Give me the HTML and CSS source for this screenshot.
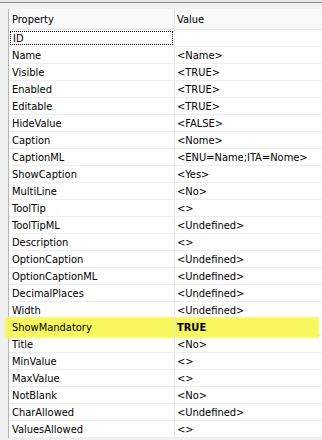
FILE: index.html
```html
<!DOCTYPE html>
<html lang="en">
<head>
  <meta charset="UTF-8">
  <title>Field Properties</title>
  <link rel="stylesheet" href="styles.css">
</head>
<body>
  <div class="topbar"></div>
  <div class="panel">
    <div class="grid">
      <div class="row head">
        <span class="prop">Property</span>
        <span class="val">Value</span>
      </div>
      <div class="row focus">
        <span class="prop"><span class="focus-box">ID</span></span>
        <span class="val"></span>
      </div>
      <div class="row"><span class="prop">Name</span><span class="val">&lt;Name&gt;</span></div>
      <div class="row"><span class="prop">Visible</span><span class="val">&lt;TRUE&gt;</span></div>
      <div class="row"><span class="prop">Enabled</span><span class="val">&lt;TRUE&gt;</span></div>
      <div class="row"><span class="prop">Editable</span><span class="val">&lt;TRUE&gt;</span></div>
      <div class="row"><span class="prop">HideValue</span><span class="val">&lt;FALSE&gt;</span></div>
      <div class="row"><span class="prop">Caption</span><span class="val">&lt;Nome&gt;</span></div>
      <div class="row"><span class="prop">CaptionML</span><span class="val">&lt;ENU=Name;ITA=Nome&gt;</span></div>
      <div class="row"><span class="prop">ShowCaption</span><span class="val">&lt;Yes&gt;</span></div>
      <div class="row"><span class="prop">MultiLine</span><span class="val">&lt;No&gt;</span></div>
      <div class="row"><span class="prop">ToolTip</span><span class="val">&lt;&gt;</span></div>
      <div class="row"><span class="prop">ToolTipML</span><span class="val">&lt;Undefined&gt;</span></div>
      <div class="row"><span class="prop">Description</span><span class="val">&lt;&gt;</span></div>
      <div class="row"><span class="prop">OptionCaption</span><span class="val">&lt;Undefined&gt;</span></div>
      <div class="row"><span class="prop">OptionCaptionML</span><span class="val">&lt;Undefined&gt;</span></div>
      <div class="row"><span class="prop">DecimalPlaces</span><span class="val">&lt;Undefined&gt;</span></div>
      <div class="row"><span class="prop">Width</span><span class="val">&lt;Undefined&gt;</span></div>
      <div class="row marked"><span class="prop">ShowMandatory</span><span class="val strong">TRUE</span></div>
      <div class="row"><span class="prop">Title</span><span class="val">&lt;No&gt;</span></div>
      <div class="row"><span class="prop">MinValue</span><span class="val">&lt;&gt;</span></div>
      <div class="row"><span class="prop">MaxValue</span><span class="val">&lt;&gt;</span></div>
      <div class="row"><span class="prop">NotBlank</span><span class="val">&lt;No&gt;</span></div>
      <div class="row"><span class="prop">CharAllowed</span><span class="val">&lt;Undefined&gt;</span></div>
      <div class="row"><span class="prop">ValuesAllowed</span><span class="val">&lt;&gt;</span></div>
    </div>
  </div>
</body>
</html>
```
FILE: styles.css
```css
body {
  margin: 0;
  background-color: #f0f0f0;
  font-family: "DejaVu Sans Condensed", "Liberation Sans", sans-serif;
  font-size: 11px;
  color: #000000;
  overflow: hidden;
}

.topbar {
  height: 2px;
  background-color: #e6e6e6;
  border-bottom: 1px solid #8c8c8c;
}

.panel {
  padding: 6px 0 0 8px;
}

.grid {
  background-color: #ffffff;
  border-left: 1px solid #b4b4b4;
}

.row {
  display: flex;
  height: 17px;
  line-height: 17px;
  border-bottom: 1px solid #ededed;
  box-sizing: border-box;
  position: relative;
}

.prop {
  width: 166px;
  padding-left: 3px;
  box-sizing: border-box;
  border-right: 1px solid #e6e6e6;
  white-space: nowrap;
  position: relative;
  z-index: 1;
}

.val {
  flex: 1;
  padding-left: 2px;
  white-space: nowrap;
  position: relative;
  z-index: 1;
}

.head {
  height: 21px;
  line-height: 21px;
  background-color: #f9f9f9;
  border-bottom: 1px solid #e3e8ee;
}

.head .prop {
  border-right: 1px solid #e2e2e2;
}

.focus .prop {
  padding: 1px;
}

.focus-box {
  display: block;
  height: 14px;
  line-height: 14px;
  padding-left: 2px;
  border: 1px dotted #000000;
  box-sizing: border-box;
}

.strong {
  font-weight: bold;
}

/* highlighter stroke over the mandatory row */
.marked::before {
  content: "";
  position: absolute;
  left: -4px;
  right: 3px;
  top: -2px;
  bottom: -3px;
  background-color: #f8f85e;
  filter: blur(0.8px);
  z-index: 0;
}
```
